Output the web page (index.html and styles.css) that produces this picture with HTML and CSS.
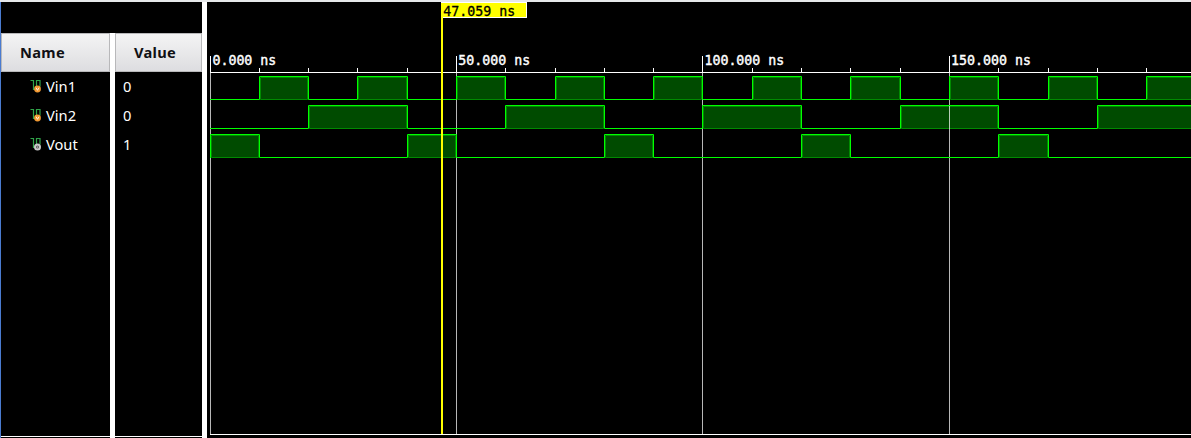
FILE: index.html
```
<!DOCTYPE html>
<html lang="en">
<head>
<meta charset="utf-8">
<title>Waveform viewer</title>
<link rel="stylesheet" href="styles.css">
</head>
<body>
<svg class="defs" aria-hidden="true">
  <symbol id="net" viewBox="0 0 12 14">
    <path d="M.5 1.500h3v9h3v-9h3.500v6" fill="none" stroke="#2fa348" stroke-width="1.2"/>
  </symbol>
  <symbol id="input" viewBox="0 0 12 14">
    <use href="#net"/>
    <circle cx="7.5" cy="10" r="3.4" fill="#f39a32"/>
    <path d="M6 8.7l1.5 2.6L9 8.7" fill="none" stroke="#fff0dc" stroke-width="1"/>
  </symbol>
  <symbol id="output" viewBox="0 0 12 14">
    <use href="#net"/>
    <circle cx="7.5" cy="10" r="2.5" fill="#555" stroke="#c8c8c8" stroke-width="2"/>
    <circle cx="7.5" cy="10" r=".6" fill="#eee"/>
  </symbol>
</svg>
<main class="viewer">
  <section class="signals">
    <div class="column names">
      <h2 class="heading">Name</h2>
      <ul class="list">
        <li class="row"><svg class="icon"><use href="#input"/></svg>Vin1</li>
        <li class="row"><svg class="icon"><use href="#input"/></svg>Vin2</li>
        <li class="row"><svg class="icon"><use href="#output"/></svg>Vout</li>
      </ul>
    </div>
    <div class="column values">
      <h2 class="heading">Value</h2>
      <ul class="list">
        <li class="row">0</li>
        <li class="row">0</li>
        <li class="row">1</li>
      </ul>
    </div>
  </section>
  <svg class="waves" viewBox="207 2 984 436" width="984" height="436">
    <g class="high">
      <path d="M260.5 77.5h47v22h-47zM358.5 77.5h48v22h-48zM457.5 77.5h47v22h-47zM556.5 77.5h47v22h-47zM654.5 77.5h47v22h-47zM753.5 77.5h47v22h-47zM851.5 77.5h48v22h-48zM950.5 77.5h47v22h-47zM1049.5 77.5h47v22h-47zM1147.5 77.5h47v22h-47z"/>
      <path d="M309.5 106.5h97v22h-97zM506.5 106.5h97v22h-97zM703.5 106.5h97v22h-97zM901.5 106.5h96v22h-96zM1098.5 106.5h97v22h-97z"/>
      <path d="M211.5 135.5h47v22h-47zM408.5 135.5h47v22h-47zM605.5 135.5h47v22h-47zM802.5 135.5h47v22h-47zM999.5 135.5h48v22h-48z"/>
    </g>
    <path class="grid" d="M210.5 73v361M456.5 73v361M702.5 73v361M949.5 73v361"/>
    <path class="axis" d="M210 72.5h981M210 434.5h981M210.5 56v17M456.5 56v17M702.5 56v17M949.5 56v17M259.5 68v5M308.5 68v5M357.5 68v5M407.5 68v5M505.5 68v5M555.5 68v5M604.5 68v5M653.5 68v5M752.5 68v5M801.5 68v5M850.5 68v5M900.5 68v5M998.5 68v5M1048.5 68v5M1097.5 68v5M1146.5 68v5"/>
    <g class="trace">
      <path d="M210 99.5H259.5V76.5H308.5V99.5H357.5V76.5H407.5V99.5H456.5V76.5H505.5V99.5H555.5V76.5H604.5V99.5H653.5V76.5H702.5V99.5H752.5V76.5H801.5V99.5H850.5V76.5H900.5V99.5H949.5V76.5H998.5V99.5H1048.5V76.5H1097.5V99.5H1146.5V76.5H1191"/>
      <path d="M210 128.5H308.5V105.5H407.5V128.5H505.5V105.5H604.5V128.5H702.5V105.5H801.5V128.5H900.5V105.5H998.5V128.5H1097.5V105.5H1191"/>
      <path d="M210.5 158V134.5H259.5V157.5H407.5V134.5H456.5V157.5H604.5V134.5H653.5V157.5H801.5V134.5H850.5V157.5H998.5V134.5H1048.5V157.5H1191"/>
    </g>
    <g class="times">
      <text x="212.4" y="65">0.000 ns</text>
      <text x="458.2" y="65">50.000 ns</text>
      <text x="704.4" y="65">100.000 ns</text>
      <text x="951" y="65">150.000 ns</text>
    </g>
    <path class="cursor" d="M442 4v430"/>
    <rect class="flag" x="441.5" y="2.5" width="85" height="15"/>
    <path class="cursor" d="M442 3v15"/>
    <text class="flag-text" x="443.2" y="16">47.059 ns</text>
  </svg>
</main>
</body>
</html>
```
FILE: styles.css
```
* { box-sizing: border-box; }

body {
  margin: 0;
  background: #000;
  color: #fff;
  font-family: "Noto Sans", "Open Sans", sans-serif;
  font-size: 14.67px;
  overflow: hidden;
}

.defs { display: none; }

.viewer {
  display: flex;
  height: 438px;
  border-top: 2px solid #e6e8ea;
}

.signals {
  display: flex;
  width: 207px;
  border-left: 1px solid #4a7bd0;
  border-right: 5px solid #fff;
  padding-top: 31px;
}

.column {
  display: flex;
  flex-direction: column;
}

.names {
  width: 114px;
  border-right: 5px solid #fff;
}

.values { width: 87px; }

.heading {
  height: 39px;
  margin: 0;
  padding-left: 18px;
  border: 1px solid #b8b8ba;
  background: linear-gradient(#f4f4f4, #dddde0);
  color: #101014;
  font-size: 14.67px;
  font-weight: 700;
  letter-spacing: 0.3px;
  line-height: 37px;
}

.list {
  flex: 1;
  margin: 0 0 1px;
  padding: 0;
  border-bottom: 1px solid #fff;
  list-style: none;
}

.row {
  display: flex;
  align-items: center;
  height: 29px;
  padding: 0 0 2px 8px;
}

.names .row { padding-left: 29px; }

.icon {
  width: 12px;
  height: 14px;
  margin: 1px 4px 0 0;
}

.waves {
  display: block;
  font-family: "DejaVu Sans Mono", monospace;
  font-size: 13.29px;
}

.high {
  fill: #004b00;
  stroke: #008a00;
}

.grid { stroke: #fff; stroke-opacity: 0.72; }
.axis { stroke: #fff; }

.trace {
  fill: none;
  stroke: #00ff00;
}

.times {
  fill: #fff;
  stroke: #fff;
  stroke-width: 0.4px;
}

.cursor {
  stroke: #ff0;
  stroke-width: 2px;
}

.flag {
  fill: #ff0;
  stroke: #fff;
}

.flag-text {
  fill: #000;
  stroke: #000;
  stroke-width: 0.3px;
}
```
